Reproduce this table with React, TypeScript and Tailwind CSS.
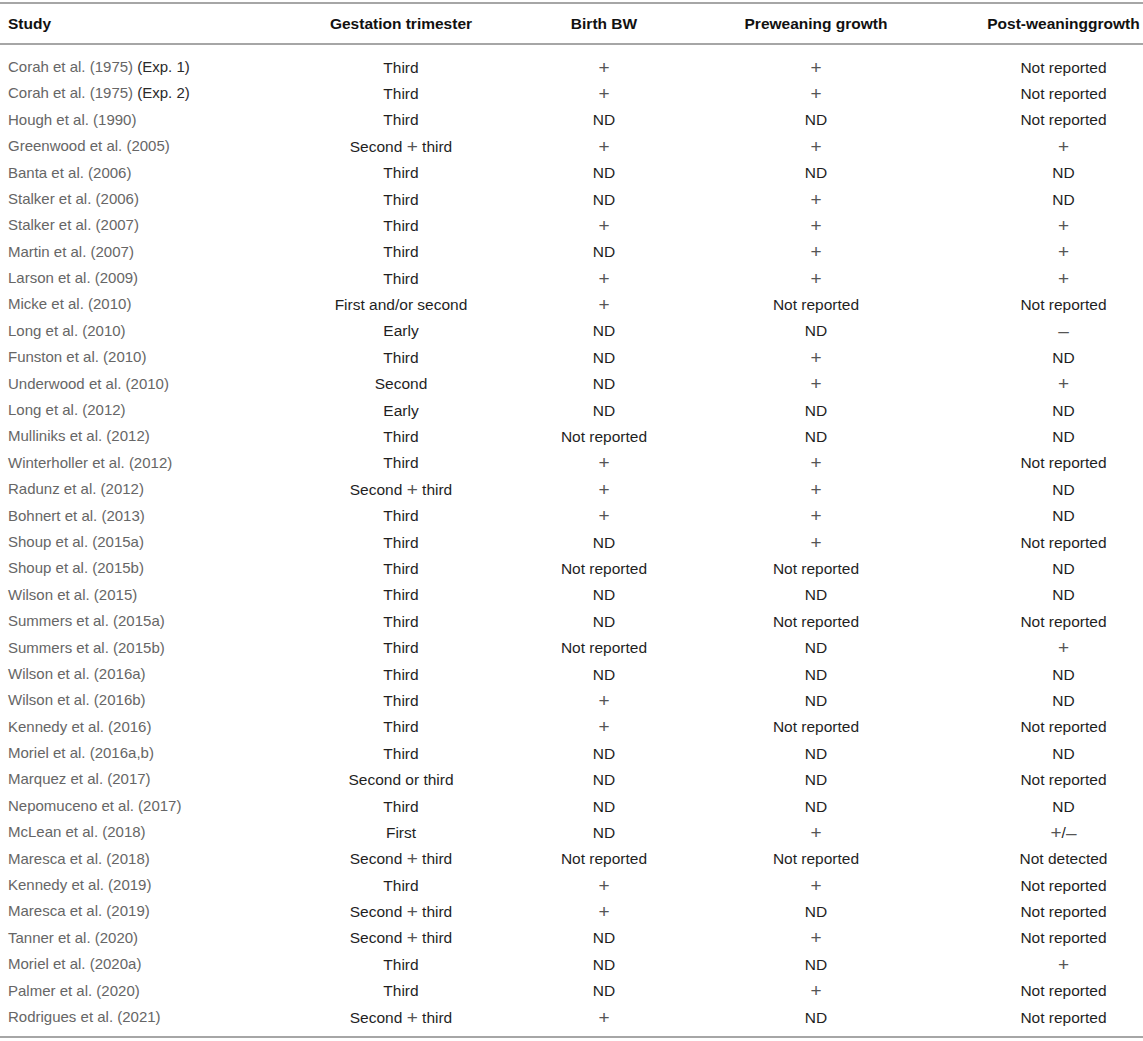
import React from 'react';

type Row = [React.ReactNode, string, string, string, string];

const NR = 'Not reported';

const rows: Row[] = [
  [<>Corah et al. (1975) <span className="text-[#2a2a2a]">(Exp. 1)</span></>, 'Third', '+', '+', NR],
  [<>Corah et al. (1975) <span className="text-[#2a2a2a]">(Exp. 2)</span></>, 'Third', '+', '+', NR],
  ['Hough et al. (1990)', 'Third', 'ND', 'ND', NR],
  ['Greenwood et al. (2005)', 'Second + third', '+', '+', '+'],
  ['Banta et al. (2006)', 'Third', 'ND', 'ND', 'ND'],
  ['Stalker et al. (2006)', 'Third', 'ND', '+', 'ND'],
  ['Stalker et al. (2007)', 'Third', '+', '+', '+'],
  ['Martin et al. (2007)', 'Third', 'ND', '+', '+'],
  ['Larson et al. (2009)', 'Third', '+', '+', '+'],
  ['Micke et al. (2010)', 'First and/or second', '+', NR, NR],
  ['Long et al. (2010)', 'Early', 'ND', 'ND', '–'],
  ['Funston et al. (2010)', 'Third', 'ND', '+', 'ND'],
  ['Underwood et al. (2010)', 'Second', 'ND', '+', '+'],
  ['Long et al. (2012)', 'Early', 'ND', 'ND', 'ND'],
  ['Mulliniks et al. (2012)', 'Third', NR, 'ND', 'ND'],
  ['Winterholler et al. (2012)', 'Third', '+', '+', NR],
  ['Radunz et al. (2012)', 'Second + third', '+', '+', 'ND'],
  ['Bohnert et al. (2013)', 'Third', '+', '+', 'ND'],
  ['Shoup et al. (2015a)', 'Third', 'ND', '+', NR],
  ['Shoup et al. (2015b)', 'Third', NR, NR, 'ND'],
  ['Wilson et al. (2015)', 'Third', 'ND', 'ND', 'ND'],
  ['Summers et al. (2015a)', 'Third', 'ND', NR, NR],
  ['Summers et al. (2015b)', 'Third', NR, 'ND', '+'],
  ['Wilson et al. (2016a)', 'Third', 'ND', 'ND', 'ND'],
  ['Wilson et al. (2016b)', 'Third', '+', 'ND', 'ND'],
  ['Kennedy et al. (2016)', 'Third', '+', NR, NR],
  ['Moriel et al. (2016a,b)', 'Third', 'ND', 'ND', 'ND'],
  ['Marquez et al. (2017)', 'Second or third', 'ND', 'ND', NR],
  ['Nepomuceno et al. (2017)', 'Third', 'ND', 'ND', 'ND'],
  ['McLean et al. (2018)', 'First', 'ND', '+', '+/–'],
  ['Maresca et al. (2018)', 'Second + third', NR, NR, 'Not detected'],
  ['Kennedy et al. (2019)', 'Third', '+', '+', NR],
  ['Maresca et al. (2019)', 'Second + third', '+', 'ND', NR],
  ['Tanner et al. (2020)', 'Second + third', 'ND', '+', NR],
  ['Moriel et al. (2020a)', 'Third', 'ND', 'ND', '+'],
  ['Palmer et al. (2020)', 'Third', 'ND', '+', NR],
  ['Rodrigues et al. (2021)', 'Second + third', '+', 'ND', NR],
];

const grid = 'grid grid-cols-[300px_202px_204px_220px_217px]';

// the source sets its signs as wide, thin math glyphs
const Sign: React.FC<{ s: string }> = ({ s }) => (
  <span className="text-[19px] leading-none text-[#555] relative top-[1px]">{s}</span>
);

const renderValue = (v: string) => {
  if (v === '+' || v === '–') return <Sign s={v} />;
  if (v === '+/–') return <><Sign s="+" />/<Sign s="–" /></>;
  if (v.includes(' + ')) {
    const [a, b] = v.split(' + ');
    return <>{a} <Sign s="+" /> {b}</>;
  }
  return v;
};

export default function App() {
  return (
    <div
      className="w-[1143px] bg-white pt-[2px] text-[15.5px]"
      style={{ fontFamily: '"Liberation Sans", Arial, sans-serif' }}
    >
      <div className="border-t-2 border-b-2 border-[#a6a6a6]">
        <div className={`${grid} h-[39px] items-center font-bold text-[15.5px] text-[#111]`}>
          <div className="pl-2">Study</div>
          <div className="text-center">Gestation trimester</div>
          <div className="text-center">Birth BW</div>
          <div className="text-center">Preweaning growth</div>
          <div className="text-center pl-[58px] whitespace-nowrap">Post-weaninggrowth</div>
        </div>
      </div>
      <div className="pt-[9px] pb-[6px] border-b-2 border-[#a6a6a6]">
        {rows.map((r, i) => (
          <div key={i} className={`${grid} h-[26.4px] items-center text-[#1f1f1f]`}>
            <div className="pl-2 text-[15px] text-[#666] whitespace-nowrap">{r[0]}</div>
            <div className="text-center">{renderValue(r[1])}</div>
            <div className="text-center">{renderValue(r[2])}</div>
            <div className="text-center">{renderValue(r[3])}</div>
            <div className="text-center pl-[58px]">{renderValue(r[4])}</div>
          </div>
        ))}
      </div>
    </div>
  );
}
